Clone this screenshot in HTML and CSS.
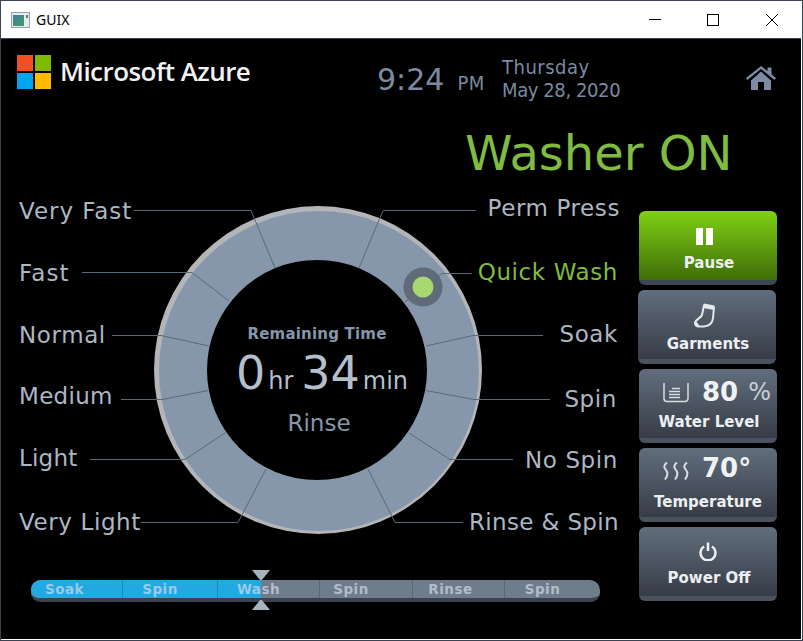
FILE: index.html
```html
<!DOCTYPE html>
<html lang="en">
<head>
    <meta charset="UTF-8">
    <title>GUIX</title>
    <link rel="stylesheet" href="styles.css">
</head>
<body>
    <div class="window">
        <div class="titlebar">
            <svg class="app-icon" width="19" height="16" viewBox="0 0 19 16">
                <defs>
                    <linearGradient id="appGrad" x1="0" y1="0" x2="1" y2="1">
                        <stop offset="0" stop-color="#4a78a0"/>
                        <stop offset="1" stop-color="#3fa060"/>
                    </linearGradient>
                </defs>
                <rect x="0.5" y="0.5" width="18" height="15" fill="#e8eaec" stroke="#9aa0a6"/>
                <rect x="2" y="3" width="11" height="11" fill="url(#appGrad)"/>
                <rect x="15" y="3" width="2" height="3" fill="#5a7a80"/>
            </svg>
            <span class="app-name">GUIX</span>
            <div class="win-controls">
                <svg width="58" height="12" viewBox="0 0 58 12"><path d="M22 5.500H34" stroke="#000"/></svg>
                <svg width="58" height="12" viewBox="0 0 58 12"><rect x="22.500" y="0.500" width="11" height="11" fill="none" stroke="#000"/></svg>
                <svg width="58" height="12" viewBox="0 0 58 12"><path d="M23 0L35 12M35 0L23 12" stroke="#000" fill="none"/></svg>
            </div>
        </div>

        <div class="screen">
            <div class="header">
                <div class="brand">
                    <div class="ms-logo">
                        <span class="sq-red"></span>
                        <span class="sq-green"></span>
                        <span class="sq-blue"></span>
                        <span class="sq-yellow"></span>
                    </div>
                    <span class="brand-name">Microsoft Azure</span>
                </div>
                <div class="clock">
                    <span class="time">9:24</span>
                    <span class="ampm">PM</span>
                </div>
                <div class="date">
                    <div class="date-day">Thursday</div>
                    <div class="date-full">May 28, 2020</div>
                </div>
                <svg class="home" width="30" height="24" viewBox="0 0 30 24">
                    <path d="M15 0L0 12L1.500 14L15 3L28.500 14L30 12L25.500 8.300V1.500H21.500V5Z" fill="#7a8ba3"/>
                    <path d="M5 14.500L15 5.500L25 14.500V24H18V16H12V24H5Z" fill="#7a8ba3"/>
                </svg>
            </div>

            <div class="status">Washer ON</div>

            <div class="main">
                <div class="left-col">
                    <div class="dial">
                        <svg class="dial-art" width="638" height="356" viewBox="1 190 638 356">
                            <circle cx="318" cy="370" r="164" fill="#b3b5b8"/>
                            <circle cx="319" cy="371" r="160" fill="#8797ab"/>
                            <circle cx="317" cy="370" r="110" fill="#000"/>
                            <g fill="none" stroke="#5b6877">
                                <path d="M134 210.500H251L275 268"/>
                                <path d="M82 272.500H192L229 301"/>
                                <path d="M112 335.500H161L209 346"/>
                                <path d="M121 399.500H162L208 390.500"/>
                                <path d="M90 459.500H185L225 433"/>
                                <path d="M141 522.500H238L266 469"/>
                                <path d="M476 210.500H383L359 268"/>
                                <path d="M472 273.500H442L405 302"/>
                                <path d="M543 335.500H473L426 346"/>
                                <path d="M550 399.500H474L426 390.500"/>
                                <path d="M513 459.500H450L409 433"/>
                                <path d="M463 522.500H395L368 469"/>
                            </g>
                            <circle cx="423" cy="287" r="19.500" fill="#5f6b78"/>
                            <circle cx="423" cy="287" r="10.500" fill="#a8d870"/>
                        </svg>

                        <span class="mode very-fast">Very Fast</span>
                        <span class="mode fast">Fast</span>
                        <span class="mode normal">Normal</span>
                        <span class="mode medium">Medium</span>
                        <span class="mode light">Light</span>
                        <span class="mode very-light">Very Light</span>
                        <span class="mode perm-press">Perm Press</span>
                        <span class="mode quick-wash">Quick Wash</span>
                        <span class="mode soak">Soak</span>
                        <span class="mode spin">Spin</span>
                        <span class="mode no-spin">No Spin</span>
                        <span class="mode rinse-spin">Rinse &amp; Spin</span>

                        <div class="readout">
                            <div class="readout-title">Remaining Time</div>
                            <div class="readout-time">
                                <span class="big">0</span><span class="unit">hr</span>
                                <span class="big">34</span><span class="unit">min</span>
                            </div>
                            <div class="readout-phase">Rinse</div>
                        </div>
                    </div>

                    <div class="progress">
                        <div class="progress-fill"></div>
                        <div class="progress-segs">
                            <div class="seg seg-1">Soak</div>
                            <div class="seg seg-2">Spin</div>
                            <div class="seg seg-3">Wash</div>
                            <div class="seg seg-4">Spin</div>
                            <div class="seg seg-5">Rinse</div>
                            <div class="seg seg-6">Spin</div>
                        </div>
                        <div class="marker marker-top"></div>
                        <div class="marker marker-bottom"></div>
                    </div>
                </div>

                <div class="buttons">
                    <div class="btn btn-green">
                        <div class="btn-row pause-row">
                            <svg class="pause-icon" width="17" height="17" viewBox="0 0 17 17"><path d="M0 0H7V17H0ZM10 0H17V17H10Z" fill="#fff"/></svg>
                        </div>
                        <div class="btn-label">Pause</div>
                    </div>
                    <div class="btn btn-garments">
                        <div class="btn-row garment-row">
                            <svg class="sock-icon" width="21" height="26" viewBox="0 0 21 26">
                                <path d="M10 3.500L20 5.500L19 16C18.500 21 15 24 10 24.500L4.500 24.500C1.500 24.500 0.500 21.500 1.500 19.500C3 17 6.500 16 8 13Z" fill="none" stroke="#e6e9ec" stroke-width="2"/>
                                <path d="M10 1.500L20.500 3.500L20 8L9.500 6Z" fill="#e6e9ec"/>
                                <path d="M1 19C3 20 5 22 5.500 25L3 25C0.500 24 0 21 1 19Z" fill="#e6e9ec"/>
                            </svg>
                        </div>
                        <div class="btn-label">Garments</div>
                    </div>
                    <div class="btn">
                        <div class="btn-row value-row water-row">
                            <svg width="26" height="21" viewBox="0 0 26 21">
                                <path d="M1 1V16.500A3 3 0 0 0 4 19.500H22A3 3 0 0 0 25 16.500V1" fill="none" stroke="#d8dde2" stroke-width="1.500"/>
                                <path d="M9 6.500H17M6 9.500H17M6 12.500H17M6 15.500H17" stroke="#d8dde2" stroke-width="1.500"/>
                            </svg>
                            <span class="value">80</span>
                            <span class="value-unit">%</span>
                        </div>
                        <div class="btn-label">Water Level</div>
                    </div>
                    <div class="btn">
                        <div class="btn-row value-row temp-row">
                            <svg width="26" height="18" viewBox="0 0 26 18">
                                <g fill="none" stroke="#d8dde2" stroke-width="2">
                                    <path d="M4 0.500C0 3.500 1 5.500 3 8C5 10.500 5 13.500 2 17.500"/>
                                    <path d="M14 0.500C10 3.500 11 5.500 13 8C15 10.500 15 13.500 12 17.500"/>
                                    <path d="M24 0.500C20 3.500 21 5.500 23 8C25 10.500 25 13.500 22 17.500"/>
                                </g>
                            </svg>
                            <span class="value">70°</span>
                        </div>
                        <div class="btn-label temp-label">Temperature</div>
                    </div>
                    <div class="btn">
                        <div class="btn-row power-row">
                            <svg width="18" height="19" viewBox="0 0 18 19">
                                <path d="M5 4.500A7.500 7.500 0 1 0 13 4.500" fill="none" stroke="#eef0f2" stroke-width="2.500"/>
                                <path d="M9 0.500V9" stroke="#eef0f2" stroke-width="2.500"/>
                            </svg>
                        </div>
                        <div class="btn-label">Power Off</div>
                    </div>
                </div>
            </div>
        </div>
    </div>
</body>
</html>
```

FILE: styles.css
```css
* {
    box-sizing: border-box;
}
body {
    margin: 0;
    background: #fff;
    font-family: "DejaVu Sans", sans-serif;
}
.window {
    width: 803px;
    height: 641px;
    border: 1px solid #3c4354;
    padding-right: 1px;
    overflow: hidden;
}
.titlebar {
    display: flex;
    align-items: center;
    height: 38px;
    padding-left: 10px;
    background: #fff;
    border-bottom: 1px solid #3c4354;
}
.app-name {
    margin-left: 6px;
    font-family: "Noto Sans", sans-serif;
    font-size: 14px;
    color: #000;
}
.win-controls {
    display: flex;
    margin-left: auto;
}
.screen {
    width: 800px;
    height: 600px;
    background: #000;
}
.header {
    display: flex;
    align-items: flex-start;
    height: 86px;
    padding: 16px 25px 0 16px;
}
.brand {
    display: flex;
    align-items: flex-start;
    width: 360px;
    gap: 9px;
}
.ms-logo {
    display: grid;
    grid-template-columns: 16px 16px;
    grid-auto-rows: 16px;
    gap: 2px;
}
.sq-red { background: #f25022; }
.sq-green { background: #7fba00; }
.sq-blue { background: #00a4ef; }
.sq-yellow { background: #ffb900; }
.brand-name {
    font-family: "Open Sans", sans-serif;
    font-size: 26px;
    font-weight: 600;
    line-height: 32px;
    letter-spacing: -0.55px;
    color: #f2f2f2;
}
.clock {
    display: flex;
    align-items: baseline;
    gap: 13px;
    width: 125px;
    margin-top: 7px;
    color: #7b8aa0;
}
.time {
    font-size: 30px;
}
.ampm {
    font-family: "DejaVu Sans Condensed", "DejaVu Sans", sans-serif;
    font-size: 20px;
    letter-spacing: 0.5px;
}
.date {
    padding-top: 1px;
    font-family: "DejaVu Sans Condensed", "DejaVu Sans", sans-serif;
    font-size: 20px;
    line-height: 23px;
    color: #7b8aa0;
}
.date-day {
    letter-spacing: 0.5px;
}
.date-full {
    letter-spacing: -0.4px;
}
.home {
    margin-left: auto;
    margin-top: 11px;
}
.status {
    height: 65px;
    padding-left: 464px;
    font-size: 48px;
    line-height: 56px;
    color: #7fbc3f;
}
.main {
    display: flex;
}
.left-col {
    width: 638px;
}
.dial {
    position: relative;
    height: 356px;
}
.dial-art {
    display: block;
}
.mode {
    position: absolute;
    font-size: 23px;
    line-height: 28px;
    letter-spacing: 0.6px;
    color: #adb7c3;
    white-space: nowrap;
}
.very-fast { left: 18px; top: 7px; letter-spacing: 0.95px; }
.fast { left: 18px; top: 69px; letter-spacing: 1.1px; }
.normal { left: 18px; top: 131px; }
.medium { left: 18px; top: 192px; letter-spacing: 0.3px; }
.light { left: 18px; top: 254px; letter-spacing: 0.2px; }
.very-light { left: 18px; top: 318px; }
.perm-press { right: 19px; top: 4px; }
.quick-wash { right: 21px; top: 68px; color: #7fbc3f; }
.soak { right: 21px; top: 130px; }
.spin { right: 22px; top: 195px; }
.no-spin { right: 21px; top: 256px; }
.rinse-spin { right: 20px; top: 318px; letter-spacing: 0.35px; }
.readout {
    position: absolute;
    left: 206px;
    top: 70px;
    width: 220px;
    height: 220px;
    display: flex;
    flex-direction: column;
    align-items: center;
    padding-top: 64px;
}
.readout-title {
    font-size: 15px;
    font-weight: bold;
    line-height: 20px;
    letter-spacing: 0.2px;
    color: #8797ab;
}
.readout-time {
    display: flex;
    align-items: baseline;
    gap: 3px;
    height: 58px;
    margin-left: 10px;
    line-height: 58px;
    color: #b4bfcc;
}
.big {
    font-size: 46px;
}
.unit {
    font-size: 24px;
    margin-right: 5px;
}
.unit:last-child {
    margin-right: 0;
}
.readout-phase {
    margin-top: 7px;
    margin-left: 4px;
    font-size: 23px;
    line-height: 28px;
    color: #8797ab;
}
.progress {
    position: relative;
    width: 569px;
    height: 22px;
    margin: 34px 0 0 30px;
    border-radius: 10px 10px 9px 9px;
    background: #6f7c89;
    border-bottom: 4px solid #3c4250;
}
.progress-fill {
    position: absolute;
    left: 0;
    top: 0;
    width: 230px;
    height: 18px;
    background: #23a9e1;
    border-radius: 10px 0 0 9px;
}
.progress-segs {
    position: relative;
    display: flex;
    height: 18px;
}
.seg {
    padding-right: 20px;
    font-size: 13.500px;
    font-weight: bold;
    line-height: 18px;
    letter-spacing: 0.5px;
    text-align: center;
    color: rgba(205, 215, 230, 0.72);
    border-right: 1px solid rgba(40, 60, 80, 0.3);
}
.seg-1 { width: 92px; padding-right: 24px; }
.seg-2 { width: 95px; }
.seg-3 { width: 102px; }
.seg-4 { width: 93px; padding-right: 30px; }
.seg-5 { width: 92px; padding-right: 16px; }
.seg-6 { width: 95px; border-right: none; }
.marker {
    position: absolute;
    left: 221px;
    width: 18px;
    height: 10px;
    background: #a8b3bf;
}
.marker-top {
    top: -10px;
    clip-path: polygon(0 0, 100% 0, 55% 100%, 45% 100%);
}
.marker-bottom {
    top: 20px;
    clip-path: polygon(45% 0, 55% 0, 100% 100%, 0 100%);
}
.buttons {
    display: flex;
    flex-direction: column;
    gap: 5px;
    padding-top: 21px;
}
.btn {
    display: flex;
    flex-direction: column;
    align-items: center;
    width: 138px;
    height: 74px;
    border-radius: 6px;
    border-bottom: 5px solid #4a525e;
    background: linear-gradient(#626e7d, #363c47);
}
.btn-green {
    background: linear-gradient(#7fd014, #3f6d08);
    border-bottom-color: #3c4655;
}
.btn-garments {
    margin-left: -1px;
}
.btn-row {
    display: flex;
    align-items: center;
    justify-content: center;
    height: 43px;
    padding-top: 6px;
}
.pause-row {
    height: 42px;
    padding-top: 8px;
}
.pause-icon {
    margin-right: 8px;
}
.garment-row {
    height: 44px;
    padding-top: 5px;
}
.sock-icon {
    margin-right: 6px;
}
.power-row {
    height: 41px;
    padding-top: 8px;
}
.value-row {
    width: 100%;
    justify-content: flex-start;
    padding: 3px 0 0 24px;
}
.temp-row {
    height: 44px;
    padding-top: 1px;
}
.temp-row .value {
    margin-top: -5px;
}
.value {
    margin-left: 13px;
    font-size: 26px;
    font-weight: bold;
    color: #f0f2f4;
}
.value-unit {
    margin-left: 10px;
    font-size: 24px;
    color: #c8cfd6;
}
.btn-label {
    margin-left: 2px;
    font-size: 15px;
    font-weight: bold;
    line-height: 20px;
    color: #eceff2;
}
.temp-label {
    margin-left: 0;
}
```
